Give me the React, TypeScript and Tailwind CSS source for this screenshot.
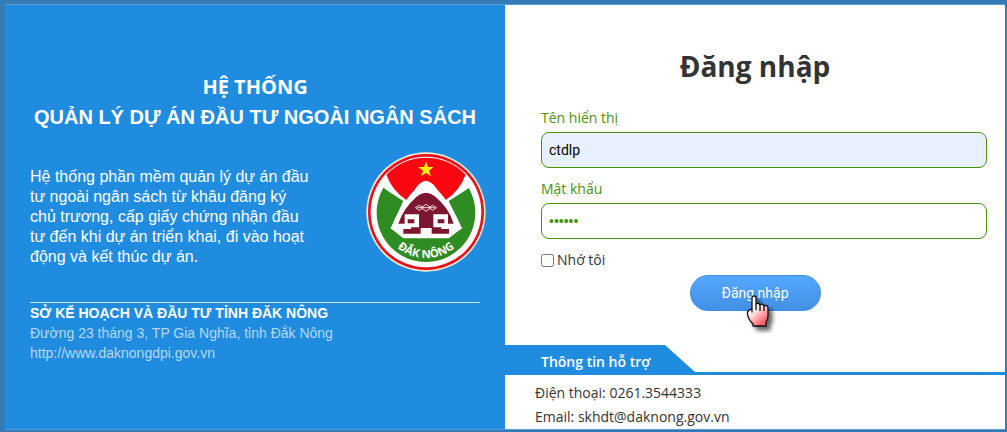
import { useState } from 'react'

const Emblem = () => (
  <svg
    className="h-[120px] w-[120px] shrink-0"
    viewBox="78 65 360 360"
    role="img"
    aria-label="Đắk Nông"
  >
    <defs>
      <clipPath id="disc">
        <circle cx="258" cy="245" r="163" />
      </clipPath>
      <clipPath id="field">
        <circle cx="258" cy="247" r="148" />
      </clipPath>
      <path id="nameArc" d="M122 247 A136 136 0 0 0 394 247" />
    </defs>
    <circle cx="258" cy="245" r="179" fill="#f3ead0" />
    <circle cx="258" cy="245" r="174" fill="#e8121c" />
    <circle cx="258" cy="245" r="166" fill="#fff" />

    {/* red sky between the two white peaks */}
    <path
      d="M138 130 Q180 70 258 70 Q336 70 378 130 Q360 182 314 211 L282 165 Q258 140 234 165 L202 211 Q156 182 138 130 Z"
      fill="#fb0712"
      clipPath="url(#disc)"
    />
    {/* green hills */}
    <g clipPath="url(#field)">
      <path d="M100 150 L147 184 L190 212 L152 294 L190 324 L326 324 L366 294 L326 212 L370 184 L420 150 V400 H100 Z" fill="#2f8c22" />
    </g>
    <polygon
      points="258,93 264,110 281,110 267,121 273,138 258,128 243,138 249,121 235,110 252,110"
      fill="#fff200"
    />

    {/* long house */}
    <path d="M258 151 Q270 153 284 169 Q338 224 366 296 H328 V322 H268 V305 H249 V322 H188 V296 H152 Q178 224 232 169 Q246 153 258 151 Z" fill="#fff" />
    <path d="M258 187 Q274 188 288 201 Q328 235 341 280 H324 V252 H280 V293 H237 V252 H194 V280 H175 Q190 235 228 201 Q242 188 258 187 Z" fill="#7d1730" />
    <path d="M203 267 H223 V279 H203 Z M293 267 H313 V279 H293 Z" fill="#7d1730" />
    <path d="M190 296 H213 V291 H242 V310 H190 Z M327 296 H304 V291 H275 V310 H327 Z" fill="#7d1730" />
    <g fill="none" stroke="#f0d7da" strokeWidth="3">
      <path d="M226 232 L238 225 L250 232 L238 240 Z M244 232 L258 222 L272 232 L258 243 Z M266 232 L278 225 L290 232 L278 240 Z" />
      <path d="M232 232 H284" />
    </g>

    <text
      fill="#fff"
      fontSize="34"
      fontWeight="700"
      fontFamily="'Noto Sans', sans-serif"
      textAnchor="middle"
    >
      <textPath href="#nameArc" startOffset="50%">
        ĐẮK NÔNG
      </textPath>
    </text>
  </svg>
)

const HandPointer = () => (
  <svg
    className="pointer-events-none absolute left-[55px] top-[19px] h-[40px] w-[32px]"
    viewBox="0 0 32 40"
    aria-hidden="true"
  >
    <defs>
      <linearGradient id="hand" x1="0" y1="0" x2="0.6" y2="1">
        <stop offset="0.45" stopColor="#fff" />
        <stop offset="1" stopColor="#ff5f66" />
      </linearGradient>
      <filter id="handShadow" x="-40%" y="-40%" width="180%" height="180%">
        <feDropShadow dx="4" dy="4" stdDeviation="2" floodOpacity="0.6" />
      </filter>
    </defs>
    <path
      d="M7 18 V4 Q7 2 9 2 Q11 2 11 4 V10 Q14 8.500 15 11 Q18 9 19 12 Q22.500 10 23 14 V22 Q23 25 21 28 V32 H8 V30 Q3 25 2.500 20 Q2 16 7 15 Z"
      fill="url(#hand)"
      stroke="#111"
      strokeWidth="1.300"
      strokeLinejoin="round"
      filter="url(#handShadow)"
    />
    <path d="M11 10 V16 M15 11 V17 M19 12 V17" stroke="#111" strokeWidth="1.300" />
  </svg>
)

const Intro = () => (
  <section className="flex flex-col bg-[#208cdf] px-[25px] pt-[67px] font-['Liberation_Sans',Arial,sans-serif] text-white">
    <h2 className="text-center text-xl leading-[30px] font-bold">
      <span className="block font-['Open_Sans',sans-serif]">HỆ THỐNG</span>
      <span className="block whitespace-nowrap">QUẢN LÝ DỰ ÁN ĐẦU TƯ NGOÀI NGÂN SÁCH</span>
    </h2>
    <div className="mt-5 flex justify-between">
      <p className="mt-[15px] w-[284px] text-base leading-5">
        Hệ thống phần mềm quản lý dự án đầu tư ngoài ngân sách từ khâu đăng ký chủ trương, cấp
        giấy chứng nhận đầu tư đến khi dự án triển khai, đi vào hoạt động và kết thúc dự án.
      </p>
      <div className="-mr-1.5">
        <Emblem />
      </div>
    </div>
    <address className="mt-[30px] border-t border-[#d3e8f9] text-sm leading-5 text-[#b5d9f5] not-italic">
      <p className="font-bold text-white">SỞ KẾ HOẠCH VÀ ĐẦU TƯ TỈNH ĐĂK NÔNG</p>
      <p>Đường 23 tháng 3, TP Gia Nghĩa, tỉnh Đắk Nông</p>
      <a href="http://www.daknongdpi.gov.vn">http://www.daknongdpi.gov.vn</a>
    </address>
  </section>
)

const LoginForm = () => {
  const [name, setName] = useState('ctdlp')
  const [password, setPassword] = useState('123456')
  const [remember, setRemember] = useState(false)

  return (
    <form className="flex flex-col pr-[18px] pl-9 text-sm" onSubmit={(e) => e.preventDefault()}>
      <label htmlFor="name" className="leading-5 text-[#4b920f]">
        Tên hiển thị
      </label>
      <input
        id="name"
        type="text"
        value={name}
        onChange={(e) => setName(e.target.value)}
        className="mt-1 h-9 w-full rounded-lg border border-[#4b920f] bg-[#e8f0fe] px-[7px] font-['Roboto',sans-serif] text-black outline-none"
      />
      <label htmlFor="password" className="mt-[11px] leading-5 text-[#4b920f]">
        Mật khẩu
      </label>
      <input
        id="password"
        type="password"
        value={password}
        onChange={(e) => setPassword(e.target.value)}
        className="mt-1 h-9 w-full rounded-lg border border-[#4b920f] bg-white px-[7px] font-['Liberation_Sans',Arial,sans-serif] text-[#4b920f] outline-none"
      />
      <div className="mt-[11px] flex items-center gap-[3px] leading-5 text-[#333]">
        <input
          id="remember"
          type="checkbox"
          checked={remember}
          onChange={(e) => setRemember(e.target.checked)}
          className="h-[13px] w-[13px]"
        />
        <label htmlFor="remember">Nhớ tôi</label>
      </div>
      <div className="relative mt-[5px] mr-[18px] self-center">
        <button
          type="submit"
          className="h-9 w-[131px] rounded-full border border-[#3d8fdf] bg-gradient-to-b from-[#54a8ff] to-[#4390e5] font-['Roboto',sans-serif] text-white"
        >
          Đăng nhập
        </button>
        <HandPointer />
      </div>
    </form>
  )
}

const Support = () => (
  <div className="mt-[34px]">
    <div className="border-b-[3px] border-[#208cdf]">
      <h3 className="h-[27px] w-[190px] bg-[#208cdf] pl-9 text-sm leading-[34px] font-semibold text-white [clip-path:polygon(0_0,160px_0,100%_100%,0_100%)]">
        Thông tin hỗ trợ
      </h3>
    </div>
    <div className="pt-1.5 pl-[30px] text-sm leading-6 text-[#333]">
      <p>Điện thoại: 0261.3544333</p>
      <p>Email: skhdt@daknong.gov.vn</p>
    </div>
  </div>
)

const App = () => (
  <div className="min-h-screen bg-[#337ab7] pt-1 pr-0.5 pb-[3px] pl-[5px]">
    <main className="grid grid-cols-2 border-y border-[#5b9bd2] font-['Open_Sans',sans-serif]">
      <Intro />
      <section className="bg-white pt-[43px]">
        <h1 className="mb-6 text-center text-[28px] leading-9 font-bold text-[#333]">
          Đăng nhập
        </h1>
        <LoginForm />
        <Support />
      </section>
    </main>
  </div>
)

export default App
